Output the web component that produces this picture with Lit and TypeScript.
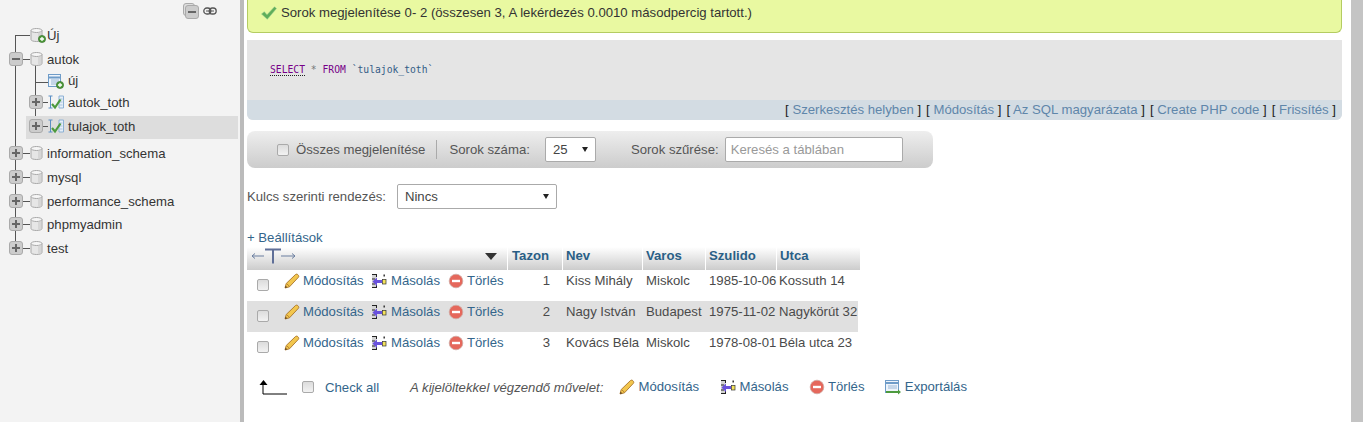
import { LitElement, html, css, svg } from "lit";
import { customElement } from "lit/decorators.js";

const badge = svg`<circle cx="12" cy="12" r="3.6" fill="#4f9a3c" stroke="#2f6b22" stroke-width=".6"/><path d="M10 12h4M12 10v4" stroke="#fff" stroke-width="1.3"/>`;
const cyl = svg`<path d="M1 3.500v9c0 1.200 2.400 2 5.500 2s5.500-.8 5.500-2v-9z" fill="#e6e6e6" stroke="#a8a8a8"/><ellipse cx="6.500" cy="3.500" rx="5.500" ry="2" fill="#f6f6f6" stroke="#a8a8a8"/><path d="M8 5.500h3v8H8z" fill="#cfcfcf" opacity=".7"/>`;
const dbIcon = (plus = false) => html`<svg class="i16" viewBox="0 0 16 16">${cyl}${plus ? badge : ""}</svg>`;
const newTable = html`<svg class="i16 tb" viewBox="0 0 16 16"><rect x=".5" y="1.500" width="12" height="12" fill="#eef4fb" stroke="#6f9cc8"/><path d="M.5 4.500h12" stroke="#6f9cc8" stroke-width="2"/><path d="M3 7h8M3 9h8M3 11h8" stroke="#9bb8d6"/>${badge}</svg>`;
const viewIcon = html`<svg class="i16 tbv" viewBox="0 0 16 16"><path d="M.5 2h4M2.500 2v12M.5 14h4" stroke="#5b8fc5" fill="none"/><path d="M11 2h4.500v12H11z" fill="#e6eff8" stroke="#8cb0d4"/><path d="M12 5h2.500M12 8h2.500M12 11h2.500" stroke="#aac4de"/><path d="M4 10l3 3.500 5.500-8" fill="none" stroke="#4d9a3e" stroke-width="2.200"/></svg>`;
const pencil = html`<svg class="i16" viewBox="0 0 16 16"><path d="M1 15l1.200-4.500L11.500 1.500c.8-.6 1.700-.5 2.500.3.800.8 1 1.800.4 2.500L5.500 13.800z" fill="#f2c64e" stroke="#a8742a" stroke-width=".9"/><path d="M3 11l2.500 2.300" stroke="#a8742a" stroke-width=".8"/><path d="M1 15l.6-2.300 1.700 1.600z" fill="#5a4020"/></svg>`;
const copy = html`<svg class="i16 cp" viewBox="0 0 16 16"><rect x="1" y="1.500" width="4.500" height="13" fill="#d4d4d4"/><path d="M1 1.500h5M1 14.500h5M1 6h3M1 11h3M5.500 1.500v2.500M5.500 12v2.500" stroke="#222" fill="none"/><path d="M1.500 8.500l4.500-4v2.500h5v3H6v3z" fill="#6a52dc"/><rect x="11.500" y="6.500" width="3.500" height="4.500" fill="#f4e25c" stroke="#333" stroke-width=".7"/><path d="M13.200 1.500v2" stroke="#333" stroke-width="1.500"/></svg>`;
const del = html`<svg class="i16" viewBox="0 0 16 16"><circle cx="8" cy="8" r="6.800" fill="#e5685c" stroke="#cfa9a3" stroke-width=".8"/><rect x="4" y="6.800" width="8" height="2.400" fill="#fff"/></svg>`;
const exportIcon = html`<svg class="i16 cp" viewBox="0 0 16 16"><rect x=".5" y="1.500" width="13" height="12" fill="#eef4fb" stroke="#6f9cc8"/><path d="M.5 4h13" stroke="#6f9cc8" stroke-width="2"/><path d="M3 7h9M3 9h9" stroke="#9bb8d6"/><path d="M1 12h12v-1.500l3 2.500-3 2.500V14H1z" fill="#4d9a3e"/></svg>`;
const okIcon = html`<svg class="ok" viewBox="0 0 16 14"><path d="M.5 8l2.800-2.300 2.700 3L13.500.8 15.500 2.500 6.300 13.300z" fill="#5fae5a" stroke="#94c990" stroke-width=".5"/></svg>`;
const linkIcon = html`<svg class="lnk" viewBox="0 0 14 8"><rect x=".8" y="1" width="7" height="6" rx="3" fill="none" stroke="#555" stroke-width="1.300"/><rect x="6.200" y="1" width="7" height="6" rx="3" fill="none" stroke="#555" stroke-width="1.300"/><path d="M3 4h8" stroke="#555"/></svg>`;

const actionCells = html`
  <td class="act"><a class="lk">${pencil}Módosítás</a></td>
  <td class="act"><a class="lk">${copy}Másolás</a></td>
  <td class="act"><a class="lk">${del}Törlés</a></td>`;

const rows = [
  [1, "Kiss Mihály", "Miskolc", "1985-10-06", "Kossuth 14"],
  [2, "Nagy István", "Budapest", "1975-11-02", "Nagykörút 32"],
  [3, "Kovács Béla", "Miskolc", "1978-08-01", "Béla utca 23"],
];

const dbs = ["information_schema", "mysql", "performance_schema", "phpmyadmin", "test"];

@customElement("app-root")
export class AppRoot extends LitElement {
  static styles = css`
    :host { display: flex; width: 1363px; height: 422px; overflow: hidden; background: #fff;
      font-family: "Liberation Sans", Arial, sans-serif; font-size: 13.17px; color: #4a4a4a; }
    * { box-sizing: border-box; }
    svg { display: block; flex: none; }
    .i16 { width: 16px; height: 16px; }
    .ok { width: 16px; height: 14px; margin-right: 4px; }
    .lnk { width: 14px; height: 8px; margin-top: 4px; }

    .side { width: 244px; flex: none; background: #f3f3f3; border-right: 4px solid #bbb; position: relative; }
    .side-top { height: 23px; display: flex; align-items: flex-start; padding: 3px 0 0 183px; gap: 5px; }
    .collapse { position: relative; width: 15px; height: 15px; }
    .collapse .bk { position: absolute; left: 0; top: 0; width: 12px; height: 13px; border: 1px solid #aaa; border-radius: 3px; background: #ddd; }
    .collapse .ex { position: absolute; left: 2px; top: 2px; }
    .tree { position: relative; color: #333; }
    .vl1 { position: absolute; left: 15px; top: 12px; width: 1px; height: 213px; background: #555; }
    .vl2 { position: absolute; left: 35px; top: 42px; width: 1px; height: 61px; background: #555; }
    .row { display: flex; align-items: center; height: 24px; position: relative; }
    .row.db { padding-left: 9px; }
    .row.tbl { padding-left: 29px; }
    .row.first { padding-left: 30px; }
    .row.newt { height: 19px; padding-left: 48px; }
    .row.sel::before { content: ""; position: absolute; left: 26px; right: 2px; top: 2px; bottom: -1px; background: #ddd; }
    .row > * { position: relative; }
    .row.sp { margin-top: 3px; }
    .row.tight { margin-top: -1px; }
    .hl { height: 1px; background: #555; flex: none; }
    .hl.a { width: 7px; }
    .hl.b { width: 5px; }
    .row > .conn0 { position: absolute; left: 15px; top: 12px; width: 15px; height: 1px; background: #555; }
    .row > .conn1 { position: absolute; left: 35px; top: 11px; width: 13px; height: 1px; background: #555; }
    .ex { width: 14px; height: 14px; flex: none; border: 1px solid #aaa; border-radius: 3px; background: #ccc;
      display: flex; align-items: center; justify-content: center; }
    .ex.minus::before { content: ""; width: 8px; height: 2px; background: #666; }
    .ex.plus { position: relative; }
    .ex.plus::before { content: ""; position: absolute; left: 2px; top: 5px; width: 8px; height: 2px; background: #666; }
    .ex.plus::after { content: ""; position: absolute; left: 5px; top: 2px; width: 2px; height: 8px; background: #666; }
    .lbl-db { margin-left: 1px; }
    .lbl-t { margin-left: 4px; }
    .tb { margin-right: 4px; }

    .main { width: 1107px; flex: none; padding: 0 9px 0 3px; }
    .bar { width: 12px; flex: none; background: #c4c4c4; }
    .notice { height: 33px; background: #e9f9a1; border: 1px solid #b4cc62; border-top: 0; border-radius: 0 0 6px 6px;
      display: flex; align-items: center; padding: 0 0 7px 13px; color: #333; margin-bottom: 7px; }
    .sql { height: 80px; background: #e5e5e5; border-radius: 0 0 6px 6px; display: flex; flex-direction: column; margin-bottom: 11px; overflow: hidden; }
    .code { flex: 1; padding: 23px 0 0 23px; font: 9.7px/13px "DejaVu Sans Mono", monospace; color: #777; white-space: pre; }
    .kw { color: #770088; }
    .kw.u { border-bottom: 1px dotted #222; }
    .str { color: #335c85; }
    .tools { height: 20px; background: #d3dce3; display: flex; align-items: center; justify-content: flex-end; gap: 5px; padding: 0 6px 2px 0; color: #222; }
    .tools a { color: #5f86aa; }

    .nav { width: 686px; height: 37px; border-radius: 8px; background: linear-gradient(#eeeeee, #cccccc);
      display: flex; align-items: center; padding-left: 30px; color: #555; margin-bottom: 16px; }
    input.cb { appearance: none; -webkit-appearance: none; width: 12px; height: 12px; margin: 0; flex: none;
      border: 1px solid #aaa; border-radius: 2px; background: linear-gradient(#dcdcdc, #f2f2f2); }
    .nav .cb { margin-right: 7px; }
    .sep { width: 1px; height: 19px; background: #aaa; margin: 0 12px 0 11px; }
    .sel-box { height: 25px; background: #fff; border: 1px solid #aaa; border-radius: 2px; display: flex; align-items: center;
      justify-content: space-between; padding: 0 7px; color: #444; flex: none; }
    .sel-box::after { content: ""; border-left: 3px solid transparent; border-right: 3px solid transparent; border-top: 5px solid #222; }
    .w51 { width: 51px; margin: 0 35px 0 15px; }
    .w160 { width: 160px; margin-left: 11px; }
    .search { width: 178px; height: 25px; margin-left: 6px; border: 1px solid #aaa; border-radius: 2px; padding: 0 5px;
      font: 13.17px "Liberation Sans", Arial, sans-serif; background: #fff; }
    .search::placeholder { color: #999; opacity: 1; }

    .sort { display: flex; align-items: center; height: 25px; color: #555; margin-bottom: 21px; }
    .settings { color: #33658b; height: 17px; line-height: 15px; }

    table { border-collapse: separate; border-spacing: 0; table-layout: fixed; width: 613px; }
    .c37 { width: 37px; } .c87 { width: 87px; } .c77 { width: 77px; } .c60 { width: 60px; }
    .c55 { width: 55px; } .c80 { width: 80px; } .c63 { width: 63px; } .c71 { width: 71px; } .c83 { width: 83px; }
    th { height: 23px; padding: 0 3px 6px; background: linear-gradient(#ffffff, #cccccc); color: #2a5f86; text-align: left;
      font-weight: bold; border-right: 1px solid #fff; white-space: nowrap; vertical-align: middle; }
    th.c { padding-left: 4px; }
    th:last-child { border-right: 0; }
    .thwrap { display: flex; align-items: center; justify-content: space-between; height: 15px; padding: 0 7px 0 0; margin-left: -1px; }
    .colarrow { width: 50px; height: 18px; }
    .tri { border-left: 6px solid transparent; border-right: 6px solid transparent; border-top: 7px solid #333; margin-top: 1px; }
    td { height: 31px; padding: 3px 0 0 3px; vertical-align: top; line-height: 15px; white-space: nowrap; overflow: visible; }
    tr:nth-child(even) td { background: #e0e0e0; }
    td:last-child { border-right: 2px solid #fff; padding-left: 2px; }
    td.n { text-align: right; padding-right: 13px; }
    td.chk { padding: 9px 0 0 10px; }
    td.act { padding-left: 0; }
    .lk { display: inline-flex; color: #33658b; gap: 3px; white-space: nowrap; }
    .cp { margin-right: 1px; }

    .foot { display: flex; align-items: center; height: 20px; margin-top: 14px; color: #555; }
    .arrow { width: 30px; height: 16px; margin-left: 11px; }
    .foot .cb { margin: 0 11px 0 14px; }
    .chkall { color: #33658b; margin-right: 31px; }
    .foot i { margin-right: 16px; }
    .foot .lk + .lk { margin-left: 20.4px; }
  `;

  render() {
    return html`
      <aside class="side">
        <div class="side-top">
          <div class="collapse"><div class="bk"></div><div class="ex minus"></div></div>
          ${linkIcon}
        </div>
        <div class="tree">
          <div class="vl1"></div>
          <div class="vl2"></div>
          <div class="row first"><div class="conn0"></div>${dbIcon(true)}<span class="lbl-db">Új</span></div>
          <div class="row db"><div class="ex minus"></div><div class="hl a"></div>${dbIcon()}<span class="lbl-db">autok</span></div>
          <div class="row newt"><div class="conn1"></div>${newTable}<span>új</span></div>
          <div class="row tbl"><div class="ex plus"></div><div class="hl b"></div>${viewIcon}<span class="lbl-t">autok_toth</span></div>
          <div class="row tbl sel"><div class="ex plus"></div><div class="hl b"></div>${viewIcon}<span class="lbl-t">tulajok_toth</span></div>
          ${dbs.map(
            (d, i) => html`<div class="row db ${i === 0 ? "sp" : ""} ${i === 3 ? "tight" : ""}"><div class="ex plus"></div><div class="hl a"></div>${dbIcon()}<span class="lbl-db">${d}</span></div>`
          )}
        </div>
      </aside>
      <main class="main">
        <div class="notice">${okIcon}<span>Sorok megjelenítése 0- 2 (összesen 3, A lekérdezés 0.0010 másodpercig tartott.)</span></div>
        <div class="sql">
          <div class="code"><span class="kw u">SELECT</span> * <span class="kw">FROM</span> <span class="str">\`tulajok_toth\`</span></div>
          <div class="tools">
            <span>[ <a>Szerkesztés helyben</a> ]</span>
            <span>[ <a>Módosítás</a> ]</span>
            <span>[ <a>Az SQL magyarázata</a> ]</span>
            <span>[ <a>Create PHP code</a> ]</span>
            <span>[ <a>Frissítés</a> ]</span>
          </div>
        </div>
        <div class="nav">
          <input type="checkbox" class="cb" />
          <span>Összes megjelenítése</span>
          <div class="sep"></div>
          <span>Sorok száma:</span>
          <div class="sel-box w51">25</div>
          <span>Sorok szűrése:</span>
          <input class="search" placeholder="Keresés a táblában" />
        </div>
        <div class="sort"><span>Kulcs szerinti rendezés:</span><div class="sel-box w160">Nincs</div></div>
        <div class="settings">+ Beállítások</div>
        <table>
          <colgroup>
            <col class="c37" /><col class="c87" /><col class="c77" /><col class="c60" />
            <col class="c55" /><col class="c80" /><col class="c63" /><col class="c71" /><col class="c83" />
          </colgroup>
          <thead>
            <tr>
              <th colspan="4">
                <div class="thwrap">
                  <svg class="colarrow" viewBox="0 0 50 18">
                    <path d="M3 9h12M3 9l3-2.500M3 9l3 2.500M32 9h14M46 9l-3-2.500M46 9l-3 2.500" stroke="#6b7fa0" fill="none"/>
                    <path d="M16 2.500h16M24 2.500v14" stroke="#5f6f98" stroke-width="2" fill="none"/>
                  </svg>
                  <div class="tri"></div>
                </div>
              </th>
              <th class="c">Tazon</th><th>Nev</th><th>Varos</th><th>Szulido</th><th>Utca</th>
            </tr>
          </thead>
          <tbody>
            ${rows.map(
              (r) => html`<tr>
                <td class="chk"><input type="checkbox" class="cb" /></td>
                ${actionCells}
                <td class="n">${r[0]}</td><td>${r[1]}</td><td>${r[2]}</td><td>${r[3]}</td><td>${r[4]}</td>
              </tr>`
            )}
          </tbody>
        </table>
        <div class="foot">
          <svg class="arrow" viewBox="0 0 30 16"><path d="M5 3v12h24" stroke="#000" fill="none"/><path d="M5.500 1L1.500 6h8z" fill="#000"/></svg>
          <input type="checkbox" class="cb" />
          <a class="chkall">Check all</a>
          <i>A kijelöltekkel végzendő művelet:</i>
          <a class="lk">${pencil}Módosítás</a>
          <a class="lk">${copy}Másolás</a>
          <a class="lk">${del}Törlés</a>
          <a class="lk">${exportIcon}Exportálás</a>
        </div>
      </main>
      <div class="bar"></div>
    `;
  }
}
